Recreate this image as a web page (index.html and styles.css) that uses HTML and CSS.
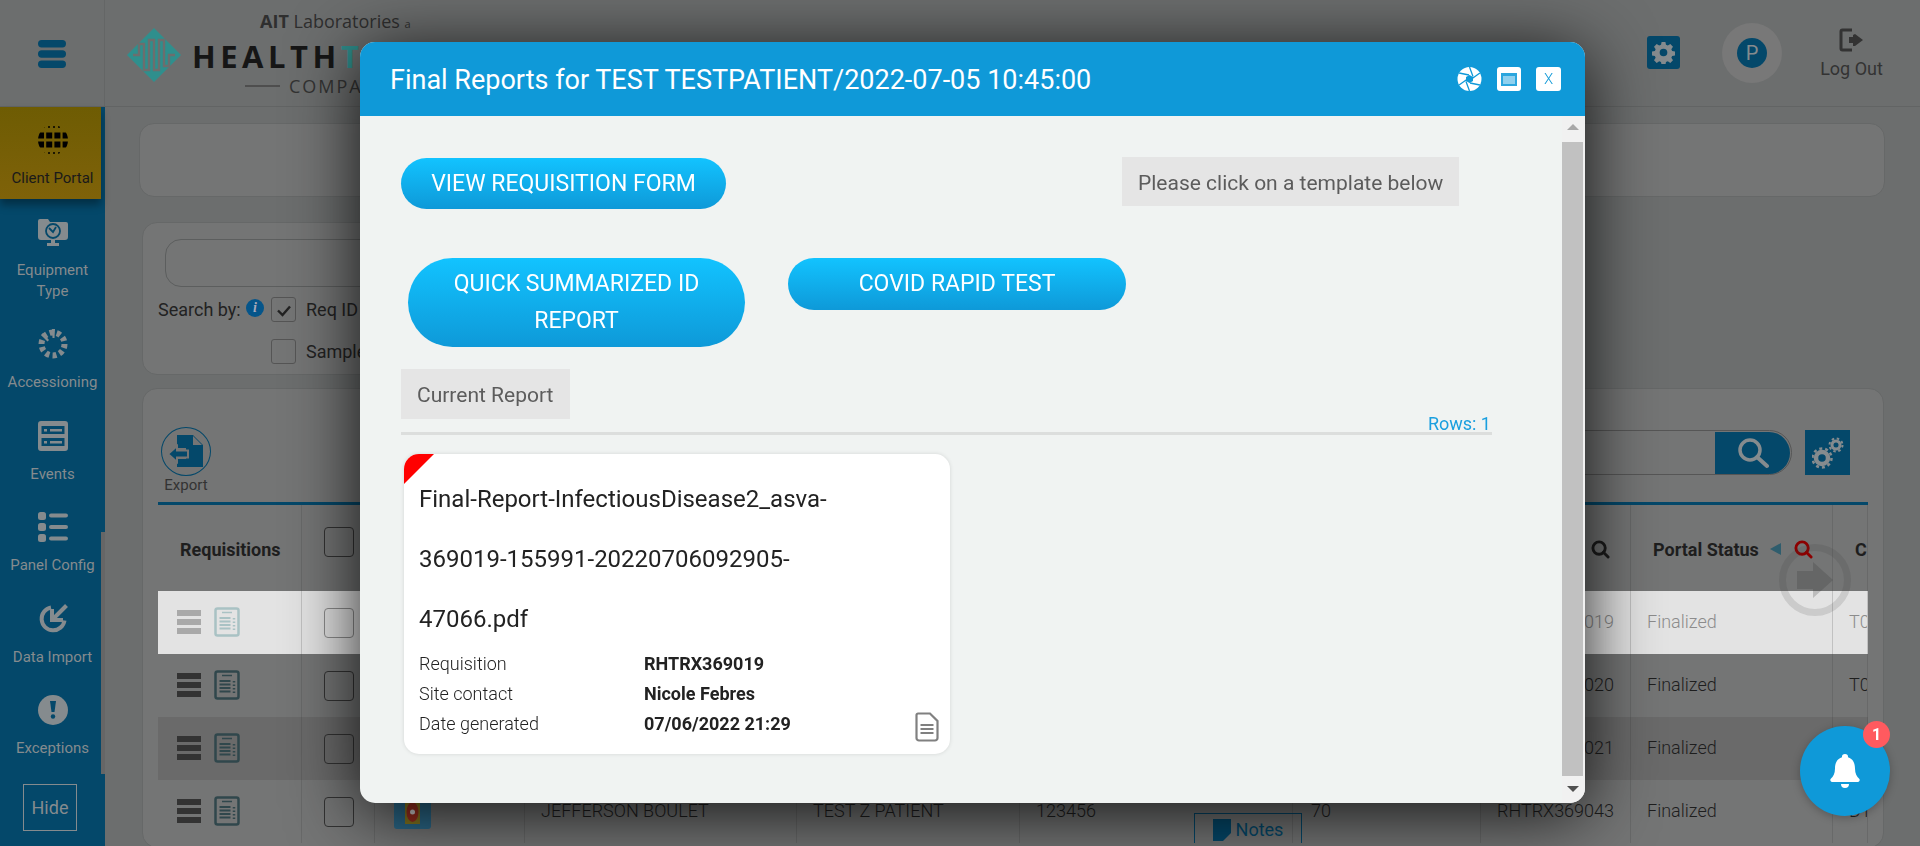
FILE: index.html
```html
<!DOCTYPE html>
<html lang="en">
<head>
  <meta charset="UTF-8">
  <title>Client Portal</title>
  <link rel="stylesheet" href="styles.css">
</head>
<body>
  <header class="topbar">
    <div class="menu_cell">
      <svg class="menu_icon" viewBox="0 0 28 28"><rect x="0" y="0" width="28" height="7.5" rx="3.7"/><rect x="0" y="10.2" width="28" height="7.5" rx="3.7"/><rect x="0" y="20.5" width="28" height="7.5" rx="3.7"/></svg>
    </div>
    <div class="logo">
      <svg class="logo_mark" viewBox="0 0 54 54">
        <path d="M27 0 54 27 27 54 0 27Z" fill="#2f8f8d"/>
        <path d="M6 27h6V16h5v26h5V12h5v30h5V12h5v26h5V27h6" fill="none" stroke="#6c6e6e" stroke-width="2.4"/>
      </svg>
      <div class="logo_text">
        <div class="logo_ait"><b>AIT</b> Laboratories <small>a</small></div>
        <div class="logo_name">HEALTH<span>T</span></div>
        <div class="logo_company"><i></i>COMPANY</div>
      </div>
    </div>
    <div class="page_title">Client Portal</div>
    <div class="top_right">
      <span class="gear_box">
        <svg viewBox="0 0 24 24" width="23" height="23"><path fill="#858b8e" d="M10 1h4l.6 3 1.9.8 2.6-1.7 2.8 2.8-1.7 2.6.8 1.9 3 .6v4l-3 .6-.8 1.9 1.7 2.6-2.8 2.8-2.6-1.7-1.9.8-.6 3h-4l-.6-3-1.9-.8-2.6 1.7-2.8-2.8 1.7-2.6-.8-1.9-3-.6v-4l3-.6.8-1.9L2.1 5.9l2.8-2.8 2.6 1.7L9.400 4ZM12 8a4 4 0 1 0 0 8 4 4 0 0 0 0-8Z"/></svg>
      </span>
      <span class="avatar"><span>P</span></span>
      <div class="logout">
        <svg viewBox="0 0 25 25" width="25" height="25"><path fill="none" stroke="#333" stroke-width="3" stroke-linejoin="round" d="M13 2H3.500A1.500 1.500 0 0 0 2 3.500v17A1.500 1.500 0 0 0 3.500 22H13"/><path fill="#333" d="M14 7V9h-4v6h4v3l2 0 8-6-8-6Z"/></svg>
        <span>Log Out</span>
      </div>
    </div>
  </header>

  <div class="app">
    <nav class="sidebar">
      <a class="nav_item active">
        <svg viewBox="0 0 30 30"><defs><clipPath id="globe"><circle cx="15" cy="15" r="15"/></clipPath></defs><g clip-path="url(#globe)" fill="none" stroke="#000"><path d="M0 10.500h30M0 19.500h30" stroke-width="6" stroke-dasharray="6 2.200"/><path d="M0 2h30M0 28h30" stroke-width="1.500" stroke-dasharray="2 3"/></g></svg>
        <span>Client Portal</span>
      </a>
      <a class="nav_item">
        <svg viewBox="0 0 30 30"><path fill="#858b8e" d="M0 4a2 2 0 0 1 2-2h8l2 3h16a2 2 0 0 1 2 2v13a3 3 0 0 1-3 3H17v3h4v3H9v-3h4v-3H3a3 3 0 0 1-3-3Z"/><circle cx="15" cy="14" r="7" fill="none" stroke="#04486a" stroke-width="1.800"/><path d="M11 11l4 4 3-5" fill="none" stroke="#04486a" stroke-width="1.800"/></svg>
        <span>Equipment<br>Type</span>
      </a>
      <a class="nav_item">
        <svg viewBox="0 0 30 30"><circle cx="15" cy="15" r="11.500" fill="none" stroke="#858b8e" stroke-width="6" stroke-dasharray="4 3.200"/><path d="M14 0h3l-.5 9h-2ZM3 6l2-2 6 7-1.500 1.500Z" fill="#858b8e"/></svg>
        <span>Accessioning</span>
      </a>
      <a class="nav_item">
        <svg viewBox="0 0 30 30"><path fill="#858b8e" fill-rule="evenodd" d="M3 0h24a3 3 0 0 1 3 3v24a3 3 0 0 1-3 3H3a3 3 0 0 1-3-3V3a3 3 0 0 1 3-3Zm.500 5v8h23V5Zm0 12v8h23v-8Z"/><path fill="#858b8e" d="M6 8h3v2.500H6ZM12 8h12v2.500H12ZM6 20h3v2.500H6ZM12 20h12v2.500H12Z"/></svg>
        <span>Events</span>
      </a>
      <a class="nav_item">
        <svg viewBox="0 0 30 30" fill="#858b8e"><rect width="8" height="8" rx="2.500" y="0"/><rect width="8" height="8" rx="2.500" y="11"/><rect width="8" height="8" rx="2.500" y="22"/><rect x="11" y="1.500" width="19" height="4" rx="2"/><rect x="11" y="13" width="19" height="4" rx="2"/><rect x="11" y="24.500" width="19" height="4" rx="2"/></svg>
        <span>Panel Config</span>
      </a>
      <a class="nav_item">
        <svg viewBox="0 0 30 30" fill="none" stroke="#858b8e"><path d="M13 3.500a11.500 11.500 0 1 0 13.500 13" stroke-width="4"/><path d="M28.500 1.500 16 14" stroke-width="4"/><path d="M14 5v11h11" stroke-width="4"/></svg>
        <span>Data Import</span>
      </a>
      <a class="nav_item">
        <svg viewBox="0 0 30 30"><circle cx="15" cy="15" r="15" fill="#858b8e"/><path d="M12 6h6l-1.500 11h-3Z" fill="#04486a"/><circle cx="15" cy="21.500" r="2.200" fill="#04486a"/></svg>
        <span>Exceptions</span>
      </a>
      <button class="hide_btn">Hide</button>
      <div class="side_scroll"></div>
    </nav>

    <main class="content">
      <section class="card top_card"></section>

      <section class="card search_card">
        <div class="search_input"></div>
        <div class="search_row">
          <span class="search_label">Search by:</span>
          <span class="info_icon">i</span>
          <span class="check"><svg viewBox="0 0 24 24" width="24" height="24"><path d="M6 12.500l4.500 4.500L18 8.500" fill="none" stroke="#222" stroke-width="2.400"/></svg></span>
          <span class="check_text">Req ID</span>
        </div>
        <div class="search_row second">
          <span class="check"></span>
          <span class="check_text">Sample</span>
        </div>
      </section>

      <section class="card table_card">
        <div class="toolbar">
          <div class="export">
            <span class="export_circle">
              <svg viewBox="0 0 40 40" width="40" height="40"><path fill="#04486a" d="M11 3h16l10 10v22H11V27h9v-5h0v-6h-9Z"/><path fill="#757575" d="M27 4l9 9h-9Z"/><path fill="#04486a" stroke="#757575" stroke-width="2" d="M2 22l9-8v4.500h11v7H11V30Z"/></svg>
            </span>
            <span>Export</span>
          </div>
          <div class="table_search">
            <div class="table_search_box">
              <span class="table_search_btn">
                <svg viewBox="0 0 32 32" width="32" height="32"><circle cx="13" cy="13" r="10" fill="none" stroke="#858b8e" stroke-width="3.500"/><path d="M20 20l10 9" stroke="#858b8e" stroke-width="4" stroke-linecap="round"/></svg>
              </span>
            </div>
            <span class="gears_box">
              <svg viewBox="0 0 32 32" width="32" height="32" fill="none" stroke="#858b8e"><circle cx="10" cy="21" r="6" stroke-width="4.500"/><circle cx="10" cy="21" r="9.500" stroke-width="2.500" stroke-dasharray="3 2.960"/><circle cx="24" cy="8" r="4" stroke-width="3"/><circle cx="24" cy="8" r="6.500" stroke-width="2" stroke-dasharray="2.500 2.600"/></svg>
            </span>
          </div>
        </div>

        <div class="tbl">
          <div class="tbl_row tbl_head">
            <div class="cell">Requisitions</div>
            <div class="cell"><span class="box head_box"></span></div>
            <div class="cell"></div>
            <div class="cell"></div>
            <div class="cell"></div>
            <div class="cell"></div>
            <div class="cell"></div>
            <div class="cell head_q">
              <svg viewBox="0 0 20 20" width="19" height="19"><circle cx="8.500" cy="8.500" r="6.500" fill="none" stroke="#1c1c1c" stroke-width="3"/><path d="M13 13l5 5" stroke="#1c1c1c" stroke-width="3" stroke-linecap="round"/></svg>
            </div>
            <div class="cell">
              <span>Portal Status</span>
              <span class="sort_arrow"></span>
              <svg class="red_q" viewBox="0 0 20 20" width="19" height="19"><circle cx="8.500" cy="8.500" r="6.500" fill="none" stroke="#8c0000" stroke-width="3"/><path d="M13 13l5 5" stroke="#8c0000" stroke-width="3" stroke-linecap="round"/></svg>
            </div>
            <div class="cell">Client</div>
          </div>

          <div class="tbl_row tbl_selected">
            <div class="cell"><span class="bars"><i></i><i></i><i></i></span><svg class="form_icon" viewBox="0 0 26 30"><use href="#form"/></svg></div>
            <div class="cell"><span class="box"></span></div>
            <div class="cell"></div><div class="cell"></div><div class="cell"></div><div class="cell"></div><div class="cell"></div>
            <div class="cell">RHTRX369019</div>
            <div class="cell">Finalized</div>
            <div class="cell">T0</div>
          </div>
          <div class="tbl_row">
            <div class="cell"><span class="bars"><i></i><i></i><i></i></span><svg class="form_icon" viewBox="0 0 26 30"><use href="#form"/></svg></div>
            <div class="cell"><span class="box"></span></div>
            <div class="cell"></div><div class="cell"></div><div class="cell"></div><div class="cell"></div><div class="cell"></div>
            <div class="cell">RHTRX369020</div>
            <div class="cell">Finalized</div>
            <div class="cell">T0</div>
          </div>
          <div class="tbl_row tbl_alt">
            <div class="cell"><span class="bars"><i></i><i></i><i></i></span><svg class="form_icon" viewBox="0 0 26 30"><use href="#form"/></svg></div>
            <div class="cell"><span class="box"></span></div>
            <div class="cell"></div><div class="cell"></div><div class="cell"></div><div class="cell"></div><div class="cell"></div>
            <div class="cell">RHTRX369021</div>
            <div class="cell">Finalized</div>
            <div class="cell">T0</div>
          </div>
          <div class="tbl_row">
            <div class="cell"><span class="bars"><i></i><i></i><i></i></span><svg class="form_icon" viewBox="0 0 26 30"><use href="#form"/></svg></div>
            <div class="cell"><span class="box"></span></div>
            <div class="cell">
              <svg class="lab_icon" viewBox="0 0 37 37"><rect width="37" height="37" rx="3" fill="#2c6b8c"/><path d="M11 8h15v24H11Z" fill="#8a7a20"/><ellipse cx="18.500" cy="20" rx="6" ry="10" fill="#a03020"/><circle cx="18.500" cy="20" r="2.500" fill="#d9d9d9"/></svg>
            </div>
            <div class="cell">JEFFERSON BOULET</div>
            <div class="cell">TEST Z PATIENT</div>
            <div class="cell">123456</div>
            <div class="cell notes_cell"><span>70</span><a class="notes_btn"><svg viewBox="0 0 18 22" width="18" height="22"><path fill="#04486a" d="M0 0h18v14l-8 8H0Z"/></svg>Notes</a></div>
            <div class="cell">RHTRX369043</div>
            <div class="cell">Finalized</div>
            <div class="cell">D1</div>
          </div>
        </div>
      </section>
    </main>
  </div>

  <!-- icon shared by the table rows -->
  <svg class="defs_only"><symbol id="form" viewBox="0 0 26 30"><rect x="1.500" y="1.500" width="23" height="27" rx="2" fill="none" stroke="currentColor" stroke-width="2.500"/><path d="M8 5.500h10" stroke="currentColor" stroke-width="1.500"/><path d="M5.500 11h11M5.500 14.500h11M5.500 18h11M5.500 21.500h11" stroke="currentColor" stroke-width="2"/><path d="M20 11v1.500M20 14.500V16M20 18v1.500M20 21.500V23" stroke="currentColor" stroke-width="2.500"/></symbol></svg>

  <div class="ghost_next">
    <svg viewBox="0 0 36 36" width="36" height="36"><path d="M0 9h16V0l20 18-20 18v-9H0Z" fill="rgba(50,50,50,.22)"/></svg>
  </div>

  <div class="notify">
    <svg viewBox="0 0 30 34" width="30" height="34"><path fill="#fff" d="M15 0a3 3 0 0 1 3 3.200c5 1.600 7 5.800 7 11.300 0 5 1.800 8 4.200 10.300 1 1.100.4 3.200-1.300 3.200H2.100C.4 28-.2 25.900.8 24.800 3.200 22.500 5 19.500 5 14.500 5 9 7 4.800 12 3.200A3 3 0 0 1 15 0Zm-4 30h8a4 4 0 0 1-8 0Z"/></svg>
    <span class="notify_badge">1</span>
  </div>

  <div class="modal">
    <div class="modal_head">
      <h2>Final Reports for TEST TESTPATIENT/2022-07-05 10:45:00</h2>
      <div class="modal_tools">
        <svg viewBox="0 0 24 24" width="25" height="24"><circle cx="12" cy="12" r="12" fill="#fff"/><path d="M12 0 15.500 9.500M22.400 6 14 12M22.400 18 12.500 16M12 24 8.500 14.500M1.600 18 10 12M1.600 6 11.500 8" stroke="#0f99d8" stroke-width="1.300" fill="none"/><path d="M12 8l3.500 2v4L12 16l-3.500-2v-4Z" fill="#0f99d8"/></svg>
        <span class="tool_box"><i class="window_glyph"></i></span>
        <span class="tool_box close_x">X</span>
      </div>
    </div>
    <div class="modal_body">
      <div class="modal_main">
        <div class="report_top">
          <button class="pill view_btn">VIEW REQUISITION FORM</button>
          <div class="hint">Please click on a template below</div>
        </div>
        <div class="templates">
          <button class="pill quick_btn">QUICK SUMMARIZED ID REPORT</button>
          <button class="pill covid_btn">COVID RAPID TEST</button>
        </div>
        <div class="current_bar">
          <div class="hint current_label">Current Report</div>
          <span class="rows_count">Rows: 1</span>
        </div>
        <div class="report_card">
          <span class="corner_flag"></span>
          <div class="report_name">Final-Report-InfectiousDisease2_asva-369019-155991-20220706092905-47066.pdf</div>
          <div class="report_info">
            <span>Requisition</span><b>RHTRX369019</b>
            <span>Site contact</span><b>Nicole Febres</b>
            <span>Date generated</span><b>07/06/2022 21:29</b>
          </div>
          <svg class="doc_icon" viewBox="0 0 24 30" width="24" height="30"><path d="M3 1.500h12L22.500 9v17a2.500 2.500 0 0 1-2.500 2.500H4A2.500 2.500 0 0 1 1.500 26V3A1.500 1.500 0 0 1 3 1.500Z" fill="#fff" stroke="#808080" stroke-width="2.200"/><path d="M5.500 13h13M5.500 17h13M5.500 21h13" stroke="#808080" stroke-width="1.800"/></svg>
        </div>
      </div>
      <div class="modal_scroll">
        <span class="arrow_up"></span>
        <span class="scroll_thumb"></span>
        <span class="arrow_down"></span>
      </div>
    </div>
  </div>
</body>
</html>
```

FILE: styles.css
```css
* { box-sizing: border-box; }
body { margin: 0; height: 846px; overflow: hidden; background: #6c6e6e; color: #222; font-family: Roboto, "Liberation Sans", sans-serif; }
button { font-family: inherit; }

/* top bar */
.topbar { display: flex; align-items: stretch; height: 107px; border-bottom: 1px solid #626464; position: relative; }
.menu_cell { width: 105px; flex: none; display: flex; align-items: center; justify-content: center; border-right: 1px solid #646666; }
.menu_icon { width: 28px; height: 28px; fill: #04486a; margin-top: 2px; }
.logo { display: flex; margin-left: 22px; width: 388px; }
.logo_mark { width: 54px; height: 54px; margin-top: 28px; flex: none; }
.logo_text { margin-left: 11px; width: 300px; position: relative; color: #1c1c1c; }
.logo_ait { margin-left: 68px; margin-top: 11px; font: 18px/21px "Open Sans", sans-serif; color: #2f2f2f; white-space: nowrap; }
.logo_ait b { font-weight: 700; }
.logo_ait small { font-size: 11px; }
.logo_name { font: 700 31px/38px "Open Sans", sans-serif; letter-spacing: 4.500px; margin-top: 3px; color: #161616; }
.logo_name span { color: #2f8f8d; }
.logo_company { display: flex; align-items: center; gap: 9px; margin-left: 53px; font: 18px/22px "Open Sans", sans-serif; letter-spacing: 2px; color: #333; }
.logo_company i { width: 35px; height: 2px; background: #4e4e4e; }
.page_title { margin-left: 29px; padding-top: 38px; font-size: 28px; line-height: 32px; color: #04486a; }
.top_right { margin-left: auto; display: flex; align-items: flex-start; }
.gear_box { width: 33px; height: 33px; margin-top: 36px; border-radius: 3px; background: #04486a; display: flex; align-items: center; justify-content: center; }
.avatar { width: 60px; height: 60px; margin: 23px 0 0 42px; border-radius: 50%; background: #787878; display: flex; align-items: center; justify-content: center; }
.avatar span { width: 30px; height: 30px; border-radius: 50%; background: #04486a; color: #858b8e; font-size: 20px; line-height: 30px; text-align: center; }
.logout { width: 63px; margin: 28px 37px 0 38px; display: flex; flex-direction: column; align-items: center; font-size: 18px; color: #333; }
.logout span { margin-top: 5px; white-space: nowrap; }

/* left nav */
.app { display: flex; height: 739px; }
.sidebar { width: 105px; flex: none; background: #04486a; position: relative; display: flex; flex-direction: column; }
.nav_item { display: flex; flex-direction: column; align-items: center; padding: 18px 0 9.500px; margin-right: 4px; text-align: center; font-size: 15px; line-height: 21px; color: #858b8e; }
.nav_item svg { width: 30px; height: 30px; margin-bottom: 13px; flex: none; margin-left: 4px; }
.nav_item span { margin-left: 4px; white-space: nowrap; }
.nav_item.active { background: linear-gradient(#6e5c03, #7f6209); color: #1a1a1a; box-shadow: 0 6px 8px rgba(0,0,0,.35); position: relative; }
.hide_btn { position: absolute; left: 23px; top: 677px; width: 54px; height: 47px; background: none; border: 1px solid #858b8e; color: #858b8e; font-size: 18px; padding: 0; }
.side_scroll { position: absolute; right: 0; top: 425px; width: 4px; height: 242px; background: #666; }

/* page cards */
.content { flex: 1; padding: 16px 36px 0 37px; }
.card { background: #747575; border: 1px solid #666868; border-radius: 15px; }
.top_card { height: 74px; margin-left: -3px; margin-right: -1px; }
.search_card { height: 153px; margin: 25px 400px 0 0; padding: 16px 22px; position: relative; }
.search_input { height: 48px; border: 1px solid #5c5e5e; border-radius: 16px; }
.search_row { display: flex; align-items: center; height: 24px; margin: 10px 0 0 -7px; font-size: 18px; color: #222; }
.search_label { width: 88px; }
.info_icon { width: 18px; height: 18px; border-radius: 50%; background: #05558a; color: #aab; font: italic 700 14px/18px "Liberation Serif", serif; text-align: center; margin: -3px 7px 0 0; }
.check { width: 25px; height: 25px; border: 1px solid #555; border-radius: 3px; flex: none; }
.check_text { margin-left: 10px; }
.search_row.second { margin-top: 18px; padding-left: 113px; }
.table_card { height: 460px; margin-top: 13px; padding: 0 15px; }

/* toolbar over the table */
.toolbar { display: flex; justify-content: space-between; height: 113px; padding-top: 38px; }
.export { margin-left: 3px; width: 50px; display: flex; flex-direction: column; align-items: center; font-size: 15px; color: #333; }
.export_circle { width: 50px; height: 49px; border: 1px solid #04486a; border-radius: 50%; display: flex; align-items: center; justify-content: center; flex: none; }
.table_search { display: flex; gap: 13px; margin: 3px 18px 0 0; }
.table_search_box { width: 500px; height: 45px; border: 1px solid #565656; border-radius: 0 23px 23px 0; display: flex; justify-content: flex-end; }
.table_search_btn { width: 75px; height: 42px; margin: 1px 1px 0 0; background: #04486a; border-radius: 0 21px 21px 0; display: flex; align-items: center; justify-content: center; }
.gears_box { width: 45px; height: 45px; background: #04486a; display: flex; align-items: center; justify-content: center; }

/* table */
.tbl { border-top: 3px solid #04486a; overflow: hidden; }
.tbl_row { display: grid; grid-template-columns: 144px 73px 150px 272px 223px 273px 188px 150px 202px 35px; height: 63px; font-size: 18px; font-weight: 300; color: #1e1e1e; }
.cell { display: flex; align-items: center; padding: 0 0 2px 16px; border-right: 1px solid rgba(60,60,60,.2); white-space: nowrap; overflow: hidden; min-width: 0; }
.cell:first-child { padding-left: 19px; }
.tbl_head { height: 86px; font-size: 18px; font-weight: 700; }
.tbl_head .cell { padding: 2px 0 0 22px; }
.tbl_alt { background: #6a6a6a; }
.tbl_selected { background: #e3e3e3; color: #8c8c8c; }
.bars { display: flex; flex-direction: column; gap: 3px; width: 24px; flex: none; }
.bars i { height: 6px; background: #333; }
.tbl_selected .bars i { background: #a9a9a9; }
.form_icon { width: 26px; height: 30px; margin-left: 13px; color: #30474c; flex: none; }
.tbl_selected .form_icon { color: #a9c2c4; }
.box { width: 30px; height: 30px; border: 1px solid #333; border-radius: 4px; margin: 2px 0 0 6px; flex: none; }
.tbl_selected .box { border-color: #8e8e8e; }
.tbl_head .head_box { margin: -15px 0 0 0; }
.tbl_head .head_q { padding-left: 110px; }
.sort_arrow { width: 0; height: 0; margin-left: 11px; border: 6px solid transparent; border-left-width: 0; border-right: 11px solid #2f5d6d; }
.red_q { margin-left: 13px; }
.lab_icon { width: 37px; height: 37px; margin: 0 0 0 3px; }
.notes_cell { overflow: visible; position: relative; padding-left: 18px; }
.notes_btn { position: absolute; left: -99px; top: 33px; width: 108px; height: 33px; border: 1px solid #04486a; color: #04486a; display: flex; align-items: center; justify-content: center; gap: 5px; font-size: 18px; font-weight: 400; }
.defs_only { position: absolute; width: 0; height: 0; }

/* floating bits */
.ghost_next { position: fixed; left: 1779px; top: 544px; width: 72px; height: 72px; border: 7px solid rgba(60,60,60,.14); border-radius: 50%; display: flex; align-items: center; justify-content: center; }
.notify { position: fixed; left: 1800px; top: 726px; width: 90px; height: 90px; border-radius: 50%; background: #0f99d8; box-shadow: 0 2px 8px rgba(0,0,0,.25); display: flex; align-items: center; justify-content: center; }
.notify_badge { position: absolute; right: 0; top: -5px; width: 27px; height: 27px; border-radius: 50%; background: #ff5a5f; color: #fff; font-weight: 700; font-size: 16px; line-height: 27px; text-align: center; }

/* modal */
.modal { position: fixed; left: 360px; top: 42px; width: 1225px; height: 761px; border-radius: 15px; overflow: hidden; background: #f0f3f2; display: flex; flex-direction: column; box-shadow: 0 10px 70px rgba(0,0,0,.85); }
.modal_head { height: 74px; flex: none; background: #0f99d8; color: #fff; display: flex; align-items: center; justify-content: space-between; padding: 0 24px 0 30px; }
.modal_head h2 { margin: 2px 0 0; font-size: 27px; font-weight: 400; }
.modal_tools { display: flex; align-items: center; gap: 15px; }
.tool_box { width: 24px; height: 24px; border-radius: 3px; background: #fff; display: flex; align-items: center; justify-content: center; }
.close_x { color: #0f99d8; width: 25px; font-size: 15px; font-weight: 300; }
.window_glyph { width: 16px; height: 13px; border: 2px solid #2ba6de; border-top-width: 3px; background: #8fd0ee; }
.modal_body { flex: 1; display: flex; min-height: 0; }
.modal_main { flex: 1; padding: 42px 0 0 41px; min-width: 0; }
.report_top { display: flex; align-items: flex-start; height: 100px; }
.pill { border: 0; color: #fff; font-size: 23px; line-height: 37px; padding: 7px 0 8px; border-radius: 26px; background: linear-gradient(#12c3ff, #0e99d8); }
.view_btn { width: 325px; height: 51px; }
.hint { background: #e5e5e5; color: #5c5c5c; font-size: 21px; padding: 3px 16px 0; line-height: 46px; height: 49px; margin-left: 396px; margin-top: -1px; white-space: nowrap; }
.templates { display: flex; align-items: flex-start; gap: 43px; margin-left: 7px; }
.quick_btn { width: 337px; height: 89px; border-radius: 45px; padding: 7px 30px 8px; }
.covid_btn { width: 338px; height: 52px; }
.current_bar { display: flex; justify-content: space-between; align-items: flex-end; width: 1091px; margin-top: 22px; border-bottom: 3px solid #dcdedd; padding-right: 1px; }
.current_label { margin: 0 0 13px; width: 169px; height: 50px; line-height: 47px; }
.rows_count { color: #1a9fdf; font-size: 18px; line-height: 18px; margin-bottom: -1px; }
.report_card { position: relative; overflow: hidden; margin: 19px 0 0 3px; width: 546px; height: 300px; padding: 15px; background: #fff; border-radius: 15px; box-shadow: 0 0 4px rgba(0,0,0,.12); }
.corner_flag { position: absolute; left: 0; top: 0; width: 30px; height: 30px; background: #ff0000; clip-path: polygon(0 0, 100% 0, 0 100%); }
.report_name { font-size: 24px; font-weight: 400; line-height: 60px; color: #222; width: 440px; }
.report_info { display: grid; grid-template-columns: 225px 1fr; font-size: 18px; line-height: 30px; font-weight: 300; color: #222; }
.report_info b { font-weight: 700; }
.doc_icon { position: absolute; right: 11px; bottom: 12px; }
.modal_scroll { width: 23px; flex: none; padding-right: 2px; background: #f1f1f1; display: flex; flex-direction: column; align-items: center; }
.arrow_up, .arrow_down { width: 0; height: 0; border: 6px solid transparent; }
.arrow_up { margin-top: 8px; border-top: 0; border-bottom: 6px solid #a8a8a8; }
.arrow_down { margin-top: 10px; border-bottom: 0; border-top: 6px solid #505050; }
.scroll_thumb { width: 21px; height: 634px; margin-top: 12px; background: #c1c1c1; }
```
